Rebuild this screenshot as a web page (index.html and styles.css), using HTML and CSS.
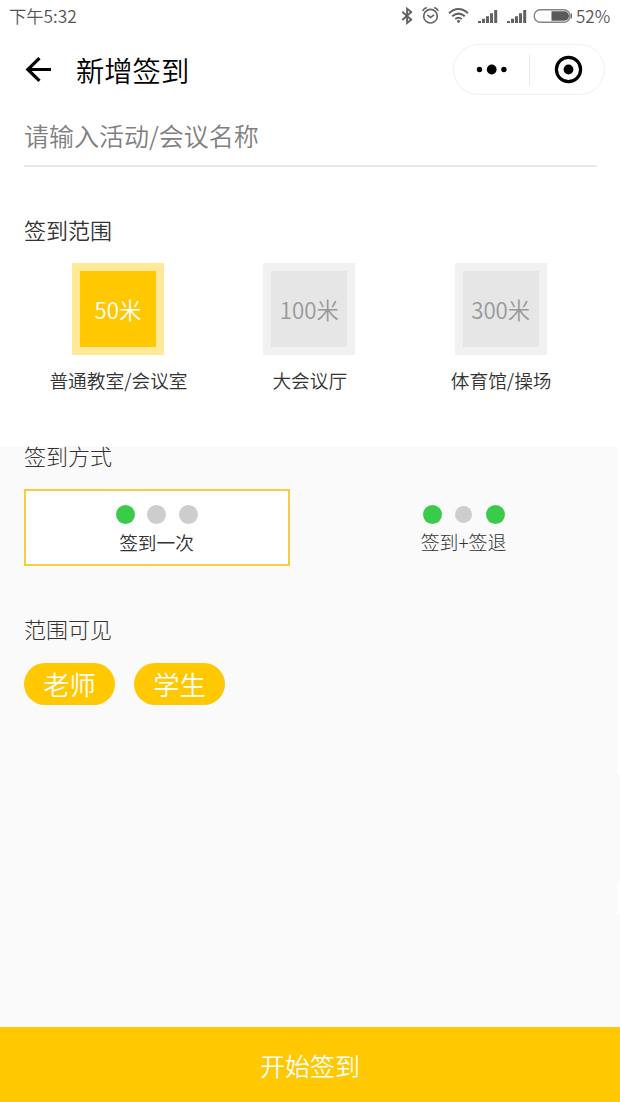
FILE: index.html
```
<!DOCTYPE html>
<html lang="zh-CN">
<head>
<meta charset="utf-8">
<title>新增签到</title>
<link rel="stylesheet" href="styles.css">
</head>
<body>
<div class="screen">
  <header class="status">
    <span class="time">下午5:32</span>
    <svg class="status-icons" width="176" height="32" viewBox="398 0 176 32" fill="none" stroke="#626262">
      <path d="M402.300 11.800l8.900 8-4.100 3.200V8.800l4.100 3.200-8.900 8" stroke-width="1.900"/>
      <circle cx="430.500" cy="16.200" r="6.800" stroke-width="1.600"/>
      <path d="M427.300 14.800l3.200 2.600 3.600-2.600M422.700 11c1-1.900 2.300-2.900 4.100-3.400M438.300 11c-1-1.900-2.300-2.900-4.100-3.400" stroke-width="1.600"/>
      <path d="M449 13.200q9.500-8.400 19 0M452.200 16.300q6.300-5.400 12.600 0M455.200 19q3.300-2.600 6.600 0" stroke-width="2"/>
      <circle cx="458.500" cy="21.200" r="1.500" fill="#626262" stroke="none"/>
      <path d="M479.500 23v-2M483.500 23v-4.200M487.500 23v-6.800M491.500 23V13.300M495.700 23V10" stroke-width="3"/>
      <path d="M508.500 23v-2M512.500 23v-4.200M516.500 23v-6.800M520.500 23V13.300M524.700 23V10" stroke-width="3"/>
      <rect x="534.200" y="9.800" width="35.800" height="12.400" rx="6.200" stroke="#858585" stroke-width="1.400"/>
      <path d="M551.500 11.300h12.800a4.700 4.700 0 0 1 0 9.400h-12.800z" fill="#5a5a5a" stroke="none"/>
      <path d="M571.300 13.500v5" stroke-width="1.200"/>
    </svg>
    <span class="percent">52%</span>
  </header>

  <nav class="nav">
    <svg class="back" width="28" height="28" viewBox="0 0 28 28" fill="none" stroke="#000" stroke-width="3.200">
      <path d="M27 13.500H4M15.500 2.200L3.800 13.500l11.700 11.300"/>
    </svg>
    <h1 class="title">新增签到</h1>
    <div class="capsule">
      <svg width="150" height="50" viewBox="0 0 150 50">
        <circle cx="25.500" cy="24.500" r="2.700"/><circle cx="37.700" cy="24.500" r="4.900"/><circle cx="49.900" cy="24.500" r="2.700"/>
        <path d="M75.500 9.500v31" stroke="#e9e9e9"/>
        <circle cx="114.500" cy="24.500" r="12.100" fill="none" stroke="#000" stroke-width="3.200"/><circle cx="114.500" cy="24.500" r="4.900"/>
      </svg>
    </div>
  </nav>

  <section class="field">请输入活动/会议名称</section>

  <section class="range">
    <h2 class="heading">签到范围</h2>
    <div class="range-list">
      <div class="option"><div class="tile tile-on">50米</div><span class="label">普通教室/会议室</span></div>
      <div class="option"><div class="tile">100米</div><span class="label">大会议厅</span></div>
      <div class="option"><div class="tile">300米</div><span class="label">体育馆/操场</span></div>
    </div>
  </section>

  <main class="panel">
    <h2 class="heading">签到方式</h2>
    <div class="modes">
      <div class="mode mode-on">
        <div class="dots"><i class="dot green"></i><i class="dot"></i><i class="dot"></i></div>
        <span class="label">签到一次</span>
      </div>
      <div class="mode">
        <div class="dots"><i class="dot green"></i><i class="dot small"></i><i class="dot green"></i></div>
        <span class="label light">签到+签退</span>
      </div>
    </div>
    <h2 class="heading">范围可见</h2>
    <div class="tags"><span class="tag">老师</span><span class="tag">学生</span></div>
  </main>

  <footer class="submit">开始签到</footer>
</div>
</body>
</html>
```
FILE: styles.css
```
* { box-sizing: border-box; }
body { margin: 0; background: #fff; font-family: "Noto Sans CJK SC DemiLight", "Noto Sans CJK SC", sans-serif; font-weight: 350; color: #333; }
.screen { display: flex; flex-direction: column; width: 620px; height: 1102px; overflow: hidden; white-space: nowrap; }
h1, h2 { margin: 0; font-weight: 350; }

.status { display: flex; height: 32px; padding: 0 9px; font-size: 17.300px; line-height: 32px; color: #555; }
.status-icons { margin-left: auto; }
.percent { width: 35px; margin-left: 2px; font-size: 17px; }

.nav { display: flex; align-items: center; height: 75px; padding: 0 15px 0 24px; color: #000; }
.title { margin-left: 24px; font-size: 28.300px; line-height: 40px; }
.capsule { width: 152px; height: 51px; margin-left: auto; border: 1px solid #f0f0f0; border-radius: 26px; }
.capsule svg { display: block; }

.field { height: 60px; margin: 0 23px 0 24px; padding-top: 8px; border-bottom: 2px solid #e8e8e8; font-size: 25px; line-height: 40px; color: #808080; }

.range { height: 279px; padding-top: 47px; }
.heading { height: 30px; padding-left: 24px; font-size: 22px; line-height: 30px; }
.range-list { display: flex; padding: 19px 23.700px 0 22.300px; }
.option { flex: 1; display: flex; flex-direction: column; align-items: center; }
.tile { width: 92px; height: 92px; border: 8px solid #f1f1f1; background: #e6e6e6; color: #999; font-size: 22.300px; line-height: 76px; text-align: center; }
.tile-on { border-color: #ffe999; background: #ffc800; color: #fff; }
.label { font-size: 18.700px; line-height: 26px; color: #333; }
.option .label { margin: 12px 0 0 1px; }

/* Short white breaks run along the right edge of the grey panel. */
.panel { height: 581px; background: linear-gradient(#fff, #fff) 617px 0 / 3px 328px no-repeat, linear-gradient(#fff, #fff) 617px 437px / 3px 32px no-repeat, #fafafa; }
.panel .heading, .mode .light { font-family: "Noto Sans CJK SC Light", "Noto Sans CJK SC", sans-serif; font-weight: 300; }
.panel .heading { height: 43px; line-height: 18px; }
.modes { display: grid; grid-template-columns: 266px 266px; gap: 41px; padding-left: 24px; }
.mode { display: flex; flex-direction: column; align-items: center; height: 77px; padding: 14px 1px 0 0; border: 2px solid transparent; }
.mode-on { border-color: #f2cd45; background: #fff; }
.dots { display: flex; align-items: center; gap: 12.500px; height: 19px; }
.dot { width: 19px; height: 19px; border-radius: 50%; background: #cdcdcd; }
.dot.green { background: #3acb4b; }
.dot.small { width: 17px; height: 17px; margin: 0 1px; }
.mode .label { margin-top: 5px; }
.mode .light { font-size: 18.900px; }
.panel .modes + .heading { height: 97px; padding-top: 53px; }
.tags { display: flex; gap: 19px; padding-left: 24px; }
.tag { width: 91px; height: 42px; border-radius: 21px; background: #ffc800; color: #fff; font-size: 26.300px; line-height: 42px; text-align: center; }

.submit { height: 75px; background: #ffc800; color: #fff; font-size: 25px; line-height: 76px; text-align: center; }
```
